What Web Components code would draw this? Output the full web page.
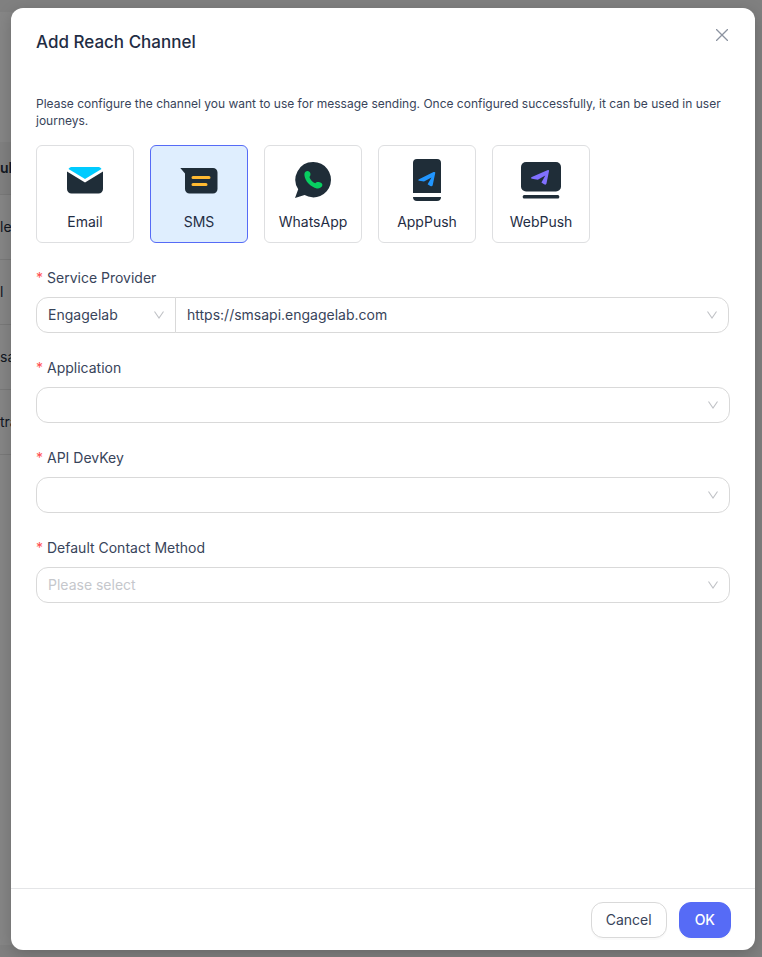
<!DOCTYPE html>
<html lang="en">
<head>
<meta charset="utf-8">
<meta name="viewport" content="width=device-width, initial-scale=1">
<title>Add Reach Channel</title>
<style>
  html, body { height: 100%; }
  body {
    margin: 0;
    font-family: Inter, "Liberation Sans", sans-serif;
    font-size: 14px;
    line-height: 22px;
    color: #38445a;
    --ink: #1f2d44;
    --line: #d9d9d9;
    --primary: #566bf6;
  }
</style>
</head>
<body>
<reach-screen>
  <channel-list slot="page"></channel-list>
  <modal-panel heading="Add Reach Channel">
    <p slot="intro">Please configure the channel you want to use for message sending. Once configured successfully, it can be used in user journeys.</p>
    <channel-tile slot="channels" label="Email">
      <svg width="36" height="36" viewBox="0 0 36 36"><path fill="#1f2d38" d="M0 9.500L18 20.500L36 9.500V27a4.500 4.500 0 0 1-4.500 4.500h-27A4.500 4.500 0 0 1 0 27z"/><path fill="#00cbff" d="M1.500 7C2.500 5.400 3.500 5 5 5h26c1.500 0 2.500.4 3.500 2L18 17z"/></svg>
    </channel-tile>
    <channel-tile slot="channels" label="SMS" selected>
      <svg width="36" height="36" viewBox="0 0 36 36"><path fill="#1f2d38" d="M-.7 6H32a4.500 4.500 0 0 1 4.500 4.500V27a4.500 4.500 0 0 1-4.500 4.500H8.500A4.500 4.500 0 0 1 4 27V11.500z"/><path stroke="#ffb931" stroke-width="3" stroke-linecap="round" d="M12 15.500h16M12 22.500h13"/></svg>
    </channel-tile>
    <channel-tile slot="channels" label="WhatsApp">
      <svg width="36" height="36" viewBox="0 0 36 36"><path fill="#1f2d38" d="M18.300 0a17.700 17.700 0 1 1-8.700 33.100L0 36l3.200-8.700A17.700 17.700 0 0 1 18.300 0z"/><path fill="#08ce61" d="M12.100 9c1.600-.2 3 1 3.300 2.500.2 1.500-.1 2.500-1 3.600 1 2.900 2.900 5 5.800 6.200 1-.9 2.100-1.500 3.600-1.200 2.300.4 4.100 1.800 3.500 3.400-.6 1.900-2.900 3.300-5.500 2.900C15.800 25.200 9.900 19.500 9.400 13.100 9.200 10.900 10.300 9.200 12.100 9z"/></svg>
    </channel-tile>
    <channel-tile slot="channels" label="AppPush">
      <svg width="36" height="36" viewBox="0 0 36 36"><path fill="#1f2d38" d="M4 1a4 4 0 0 1 4-4h20a4 4 0 0 1 4 4v30H4zM4 35h28a4 4 0 0 1-4 4H8a4 4 0 0 1-4-4z"/><path fill="#2196ff" d="M26.300 10.800L23.700 23.200Q23.100 25 21.300 23.900L18.600 22.200L22.500 15.600L15 19.600L10.300 18.800Q8.300 18.200 10 17.200L24.500 10.100Q26.300 9.600 26.300 10.800z"/></svg>
    </channel-tile>
    <channel-tile slot="channels" label="WebPush">
      <svg width="36" height="36" viewBox="0 0 36 36"><rect x="-2" y="0" width="40" height="29.500" rx="5" fill="#1f2d38"/><rect x="-.3" y="33" width="36.600" height="3.400" rx="1.500" fill="#1f2d38"/><path fill="#8170ff" d="M26.100 8.800L23.500 21.600Q22.900 23.400 21.100 22.300L18.400 20.600L22.300 13.600L14.800 17.800L9.100 16.800Q7.100 16 8.800 15L24.300 8.200Q26.100 7.700 26.100 8.800z"/></svg>
    </channel-tile>
    <select-field label="Service Provider" leading="Engagelab" value="https://smsapi.engagelab.com"></select-field>
    <select-field label="Application"></select-field>
    <select-field label="API DevKey"></select-field>
    <select-field label="Default Contact Method" placeholder="Please select"></select-field>
    <action-button slot="actions">Cancel</action-button>
    <action-button slot="actions" primary>OK</action-button>
  </modal-panel>
</reach-screen>

<script>
const define = (name, render) => customElements.define(name, class extends HTMLElement {
  connectedCallback() {
    if (this.shadowRoot) return;
    this.attachShadow({ mode: 'open' }).innerHTML = render(this);
  }
});

define('reach-screen', () => `
  <style>
    :host { display: grid; height: 100vh; overflow: hidden; background: #fff; }
    .page, .mask { grid-area: 1 / 1; min-width: 0; min-height: 0; }
    .page { overflow: hidden; }
    .mask { box-sizing: border-box; display: flex; padding: 8px 7px 7px 11px; background: rgba(0,0,0,.45); z-index: 1; }
    ::slotted(modal-panel) { flex: 1; }
  </style>
  <div class="page"><slot name="page"></slot></div>
  <div class="mask"><slot></slot></div>`);

define('channel-list', () => `
  <style>
    :host { box-sizing: border-box; display: block; height: 100%; padding: 12px 16px 12px 0; background: #eaeaea; overflow: hidden; }
    .sheet { box-sizing: border-box; height: 100%; padding-top: 130px; background: #f4f4f4; }
    table { width: 100%; border-collapse: collapse; color: #222c3c; }
    th, td { box-sizing: border-box; padding: 0; text-align: left; height: 65px; border-bottom: 1px solid #dcdcdc; font-weight: 400; }
    th { height: 52px; font-weight: 600; background: #ececec; }
  </style>
  <div class="sheet"><table>
    <thead><tr><th>ul</th></tr></thead>
    <tbody><tr><td>le</td></tr><tr><td>l</td></tr><tr><td>sa</td></tr><tr><td>tra</td></tr></tbody>
  </table></div>`);

define('modal-panel', el => `
  <style>
    :host { display: flex; flex-direction: column; min-width: 0; background: #fff; border-radius: 12px; box-shadow: 0 4px 16px rgba(0,0,0,.2); }
    header { display: flex; justify-content: space-between; align-items: flex-start; padding: 11px 17px 0 25px; }
    h2 { margin: 11px 0 0; font-size: 17px; line-height: 24px; font-weight: 500; color: var(--ink); }
    .close { display: grid; place-items: center; width: 32px; height: 32px; padding: 0; border: 0; background: none; color: #8c93a0; cursor: pointer; }
    main { flex: 1; min-height: 0; padding: 41px 25px 0; }
    ::slotted(p) { margin: 0 0 16px; font-size: 12px; line-height: 17px; }
    .channels { display: flex; flex-wrap: wrap; gap: 16px; margin-bottom: 24px; }
    .fields { display: grid; gap: 24px; }
    footer { display: flex; justify-content: flex-end; gap: 12px; padding: 13px 24px 12px; border-top: 1px solid #e4e5e7; }
  </style>
  <header>
    <h2>${el.getAttribute('heading')}</h2>
    <button class="close" type="button" aria-label="Close"><svg width="12" height="12" viewBox="0 0 12 12"><path d="M0 0L12 12M12 0L0 12" fill="none" stroke="currentColor" stroke-width="1.300"/></svg></button>
  </header>
  <main>
    <slot name="intro"></slot>
    <div class="channels"><slot name="channels"></slot></div>
    <div class="fields"><slot></slot></div>
  </main>
  <footer><slot name="actions"></slot></footer>`);

define('channel-tile', el => `
  <style>
    :host { display: block; }
    button { box-sizing: border-box; display: flex; flex-direction: column; align-items: center; gap: 13px; width: 98px; height: 98px; padding: 16px 0 0; border: 1px solid #dedfe1; border-radius: 6px; background: #fff; color: var(--ink); font: inherit; cursor: pointer; }
    :host([selected]) button { border-color: var(--primary); background: #dfeefe; }
    ::slotted(svg) { display: block; overflow: visible; }
  </style>
  <button type="button" aria-pressed="${el.hasAttribute('selected')}"><slot></slot><span>${el.getAttribute('label')}</span></button>`);

define('select-field', el => {
  const label = el.getAttribute('label');
  const leading = el.getAttribute('leading');
  const placeholder = el.getAttribute('placeholder');
  const text = el.getAttribute('value') || placeholder || '';
  const box = (cls, attrs, value) => `
    <div class="box ${cls}"><select ${attrs}><option>${value}</option></select>
    <svg width="10" height="8" viewBox="0 0 10 8" aria-hidden="true"><path d="M.5.500L5 7L9.500.500" fill="none" stroke="#c0c2c6" stroke-width="1.100"/></svg></div>`;
  return `
  <style>
    :host { display: grid; gap: 8px; }
    label { display: flex; gap: 4px; }
    label::before { content: "*"; color: #ff4d4f; }
    .row { display: flex; }
    .joined { padding-right: 1px; }
    .box { flex: 1; min-width: 0; display: grid; align-items: center; }
    select { grid-area: 1 / 1; appearance: none; box-sizing: border-box; width: 100%; height: 36px; margin: 0; padding: 0 32px 0 11px; border: 1px solid var(--line); border-radius: 12px; background: #fff; color: inherit; font: inherit; }
    .hint select { color: #c5c7cc; }
    svg { grid-area: 1 / 1; justify-self: end; margin-right: 12px; pointer-events: none; }
    .lead { flex: 0 0 140px; margin-right: -1px; }
    .lead select { border-radius: 12px 0 0 12px; }
    .lead + .box select { border-radius: 0 12px 12px 0; }
  </style>
  <label for="field">${label}</label>
  <div class="row ${leading ? 'joined' : ''}">
    ${leading ? box('lead', `id="field"`, leading) : ''}
    ${box(placeholder ? 'hint' : '', leading ? `aria-label="${label} address"` : 'id="field"', text)}
  </div>`;
});

define('action-button', () => `
  <style>
    :host { display: block; }
    button { box-sizing: border-box; height: 36px; padding: 0 14px; border: 1px solid var(--line); border-radius: 12px; background: #fff; color: inherit; font: inherit; box-shadow: 0 2px 0 rgba(0,0,0,.02); cursor: pointer; }
    :host([primary]) button { padding: 0 15px; border-color: var(--primary); background: var(--primary); color: #fff; font-weight: 500; }
  </style>
  <button type="button"><slot></slot></button>`);
</script>
</body>
</html>
